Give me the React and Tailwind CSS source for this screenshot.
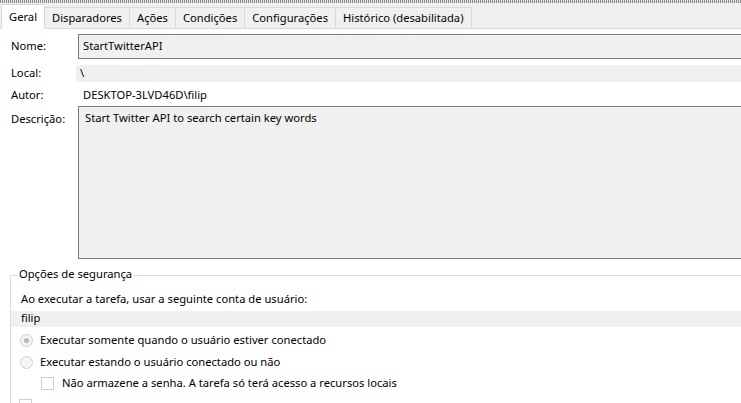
import React from "react";

const tabs = ["Disparadores", "Ações", "Condições", "Configurações", "Histórico (desabilitada)"];

function Radio({ checked }) {
  return (
    <span className="flex h-[13px] w-[13px] shrink-0 items-center justify-center rounded-full border border-[#cfcfcf] bg-[#f4f4f4]">
      {checked && <span className="h-[5px] w-[5px] rounded-full bg-[#b5b5b5]" />}
    </span>
  );
}

export default function App() {
  return (
    <div
      className="relative h-[403px] w-[741px] overflow-hidden bg-white text-[11.2px] text-black"
      style={{ fontFamily: '"Noto Sans", "Liberation Sans", sans-serif' }}
    >
      {/* dotted top edge */}
      <div className="h-[3px] bg-[repeating-linear-gradient(90deg,#8a8a8a_0px,#8a8a8a_1px,#e6e6e6_1px,#e6e6e6_2px)]" />
      <div className="h-[1px] bg-[#f0f0f0]" />

      {/* tabs */}
      <div className="flex h-[25px] items-end border-b border-[#d9d9d9] bg-[#f0f0f0] pl-[1px]">
        <div className="relative z-10 -mb-[1px] flex h-[25px] items-center border-x border-t border-[#d9d9d9] bg-white px-[7px] pt-[1px]">
          Geral
        </div>
        {tabs.map((t) => (
          <div
            key={t}
            className="-ml-[1px] flex h-[21px] items-center border border-b-0 border-[#d9d9d9] bg-[#f0f0f0] px-[7px] first:ml-0"
          >
            {t}
          </div>
        ))}
      </div>

      {/* general fields */}
      <div className="flex flex-col pt-[4px]">
        <div className="flex h-[26px] items-center">
          <span className="w-[78px] pl-[11px]">Nome:</span>
          <div className="flex h-[25px] flex-1 items-center border border-[#7a7a7a] border-r-0 bg-[#f0f0f0] pl-[4px]">
            StartTwitterAPI
          </div>
        </div>
        <div className="mt-[6px] flex h-[17px] items-center">
          <span className="w-[76px] pl-[11px]">Local:</span>
          <div className="flex h-[17px] flex-1 items-center bg-[#f0f0f0] pl-[4px]">\</div>
        </div>
        <div className="mt-[5px] flex h-[17px] items-center">
          <span className="w-[83px] pl-[11px]">Autor:</span>
          <span>DESKTOP-3LVD46D\filip</span>
        </div>
        <div className="mt-[2px] flex">
          <span className="w-[78px] pt-[5px] pl-[11px]">Descrição:</span>
          <div className="h-[153px] flex-1 border border-[#7a7a7a] border-r-0 bg-[#f0f0f0] pl-[6px] pt-[3px]">
            Start Twitter API to search certain key words
          </div>
        </div>
      </div>

      {/* security group */}
      <div className="relative mt-[16px] ml-[10px] h-[200px] border-l border-t border-[#dcdcdc]">
        <span className="absolute -top-[10px] left-[7px] bg-white px-[1px]">Opções de segurança</span>
        <div className="flex flex-col pt-[15px]">
          <div className="pl-[10px]">Ao executar a tarefa, usar a seguinte conta de usuário:</div>
          <div className="mt-[3px] flex h-[16px] items-center bg-[#f0f0f0] pl-[10px]">filip</div>
          <div className="mt-[5px] flex h-[17px] items-center gap-[7px] pl-[9px]">
            <Radio checked />
            <span>Executar somente quando o usuário estiver conectado</span>
          </div>
          <div className="mt-[5px] flex h-[17px] items-center gap-[7px] pl-[9px]">
            <Radio />
            <span>Executar estando o usuário conectado ou não</span>
          </div>
          <div className="mt-[4px] flex h-[17px] items-center gap-[8px] pl-[30px]">
            <span className="h-[13px] w-[13px] shrink-0 border border-[#cfcfcf] bg-white" />
            <span>Não armazene a senha. A tarefa só terá acesso a recursos locais</span>
          </div>
          <div className="mt-[7px] flex h-[17px] items-start pl-[8px]">
            <span className="h-[13px] w-[13px] border border-[#cfcfcf] bg-white" />
          </div>
        </div>
      </div>
    </div>
  );
}
